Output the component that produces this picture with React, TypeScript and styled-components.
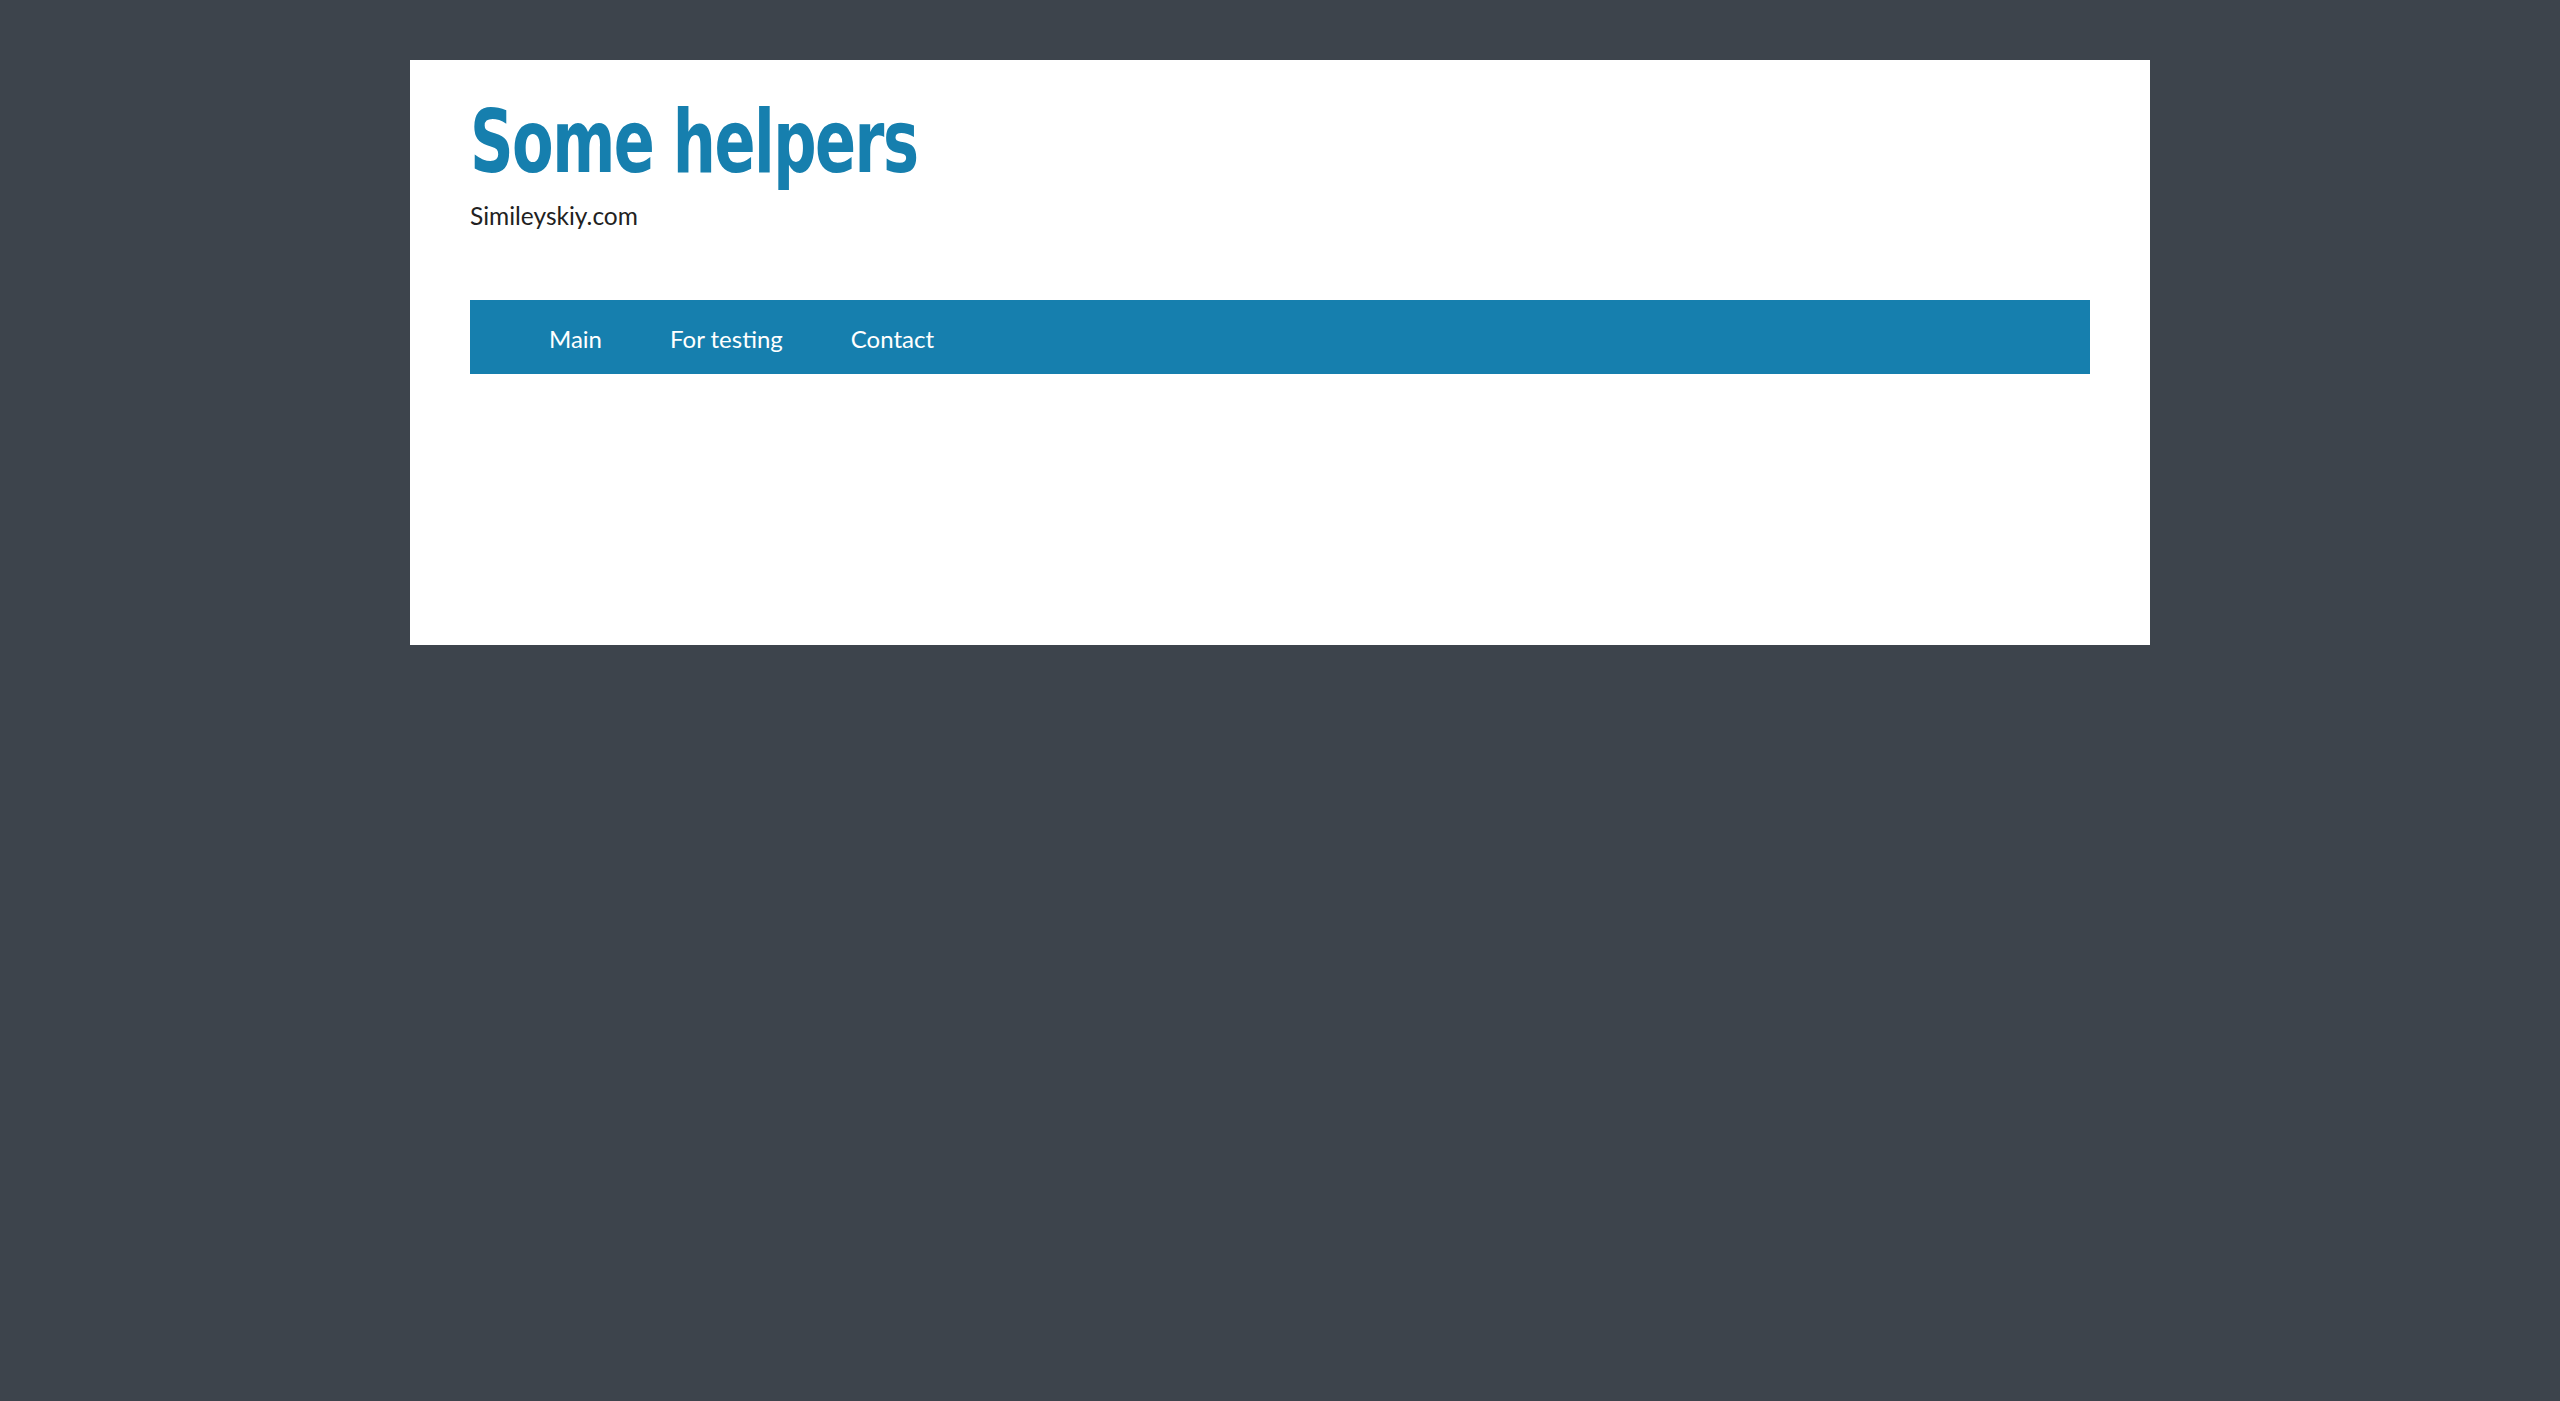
import React from "react";
import styled, { createGlobalStyle } from "styled-components";

const bodyFont = `Lato, "Open Sans", "Liberation Sans", sans-serif`;

const GlobalStyle = createGlobalStyle`
  html, body {
    margin: 0;
    padding: 0;
    background: #3d444c;
  }
  body {
    font-family: ${bodyFont};
  }
`;

const Page = styled.div`
  min-height: 1401px;
  padding-top: 60px;
  box-sizing: border-box;
`;

const Panel = styled.div`
  width: 1740px;
  height: 585px;
  margin: 0 auto;
  padding: 0 60px;
  box-sizing: border-box;
  background: #ffffff;
`;

const Header = styled.header`
  display: flex;
  flex-direction: column;
  padding-top: 26px;
  height: 240px;
  box-sizing: border-box;
`;

const Title = styled.h1`
  margin: 0;
  height: 112px;
  font-family: "DejaVu Sans Condensed", "DejaVu Sans", sans-serif;
  font-weight: bold;
  font-size: 88px;
  line-height: 112px;
  letter-spacing: -2px;
  color: #167fae;
  transform: scaleX(0.765);
  transform-origin: left center;
  white-space: nowrap;
`;

const Subtitle = styled.p`
  margin: 0;
  font-size: 24.5px;
  line-height: 35px;
  color: #222222;
`;

const Nav = styled.nav`
  display: flex;
  align-items: center;
  height: 74px;
  padding: 3px 0 0 45px;
  box-sizing: border-box;
  background: #167fae;
`;

const NavLink = styled.a`
  padding: 0 34px;
  font-size: 24px;
  line-height: 68px;
  color: #ffffff;
  text-decoration: none;
  cursor: pointer;
`;

const links = ["Main", "For testing", "Contact"];

const App: React.FC = () => {
  return (
    <Page>
      <GlobalStyle />
      <Panel>
        <Header>
          <Title>Some helpers</Title>
          <Subtitle>Simileyskiy.com</Subtitle>
        </Header>
        <Nav>
          {links.map((link) => (
            <NavLink key={link}>{link}</NavLink>
          ))}
        </Nav>
      </Panel>
    </Page>
  );
};

export default App;
